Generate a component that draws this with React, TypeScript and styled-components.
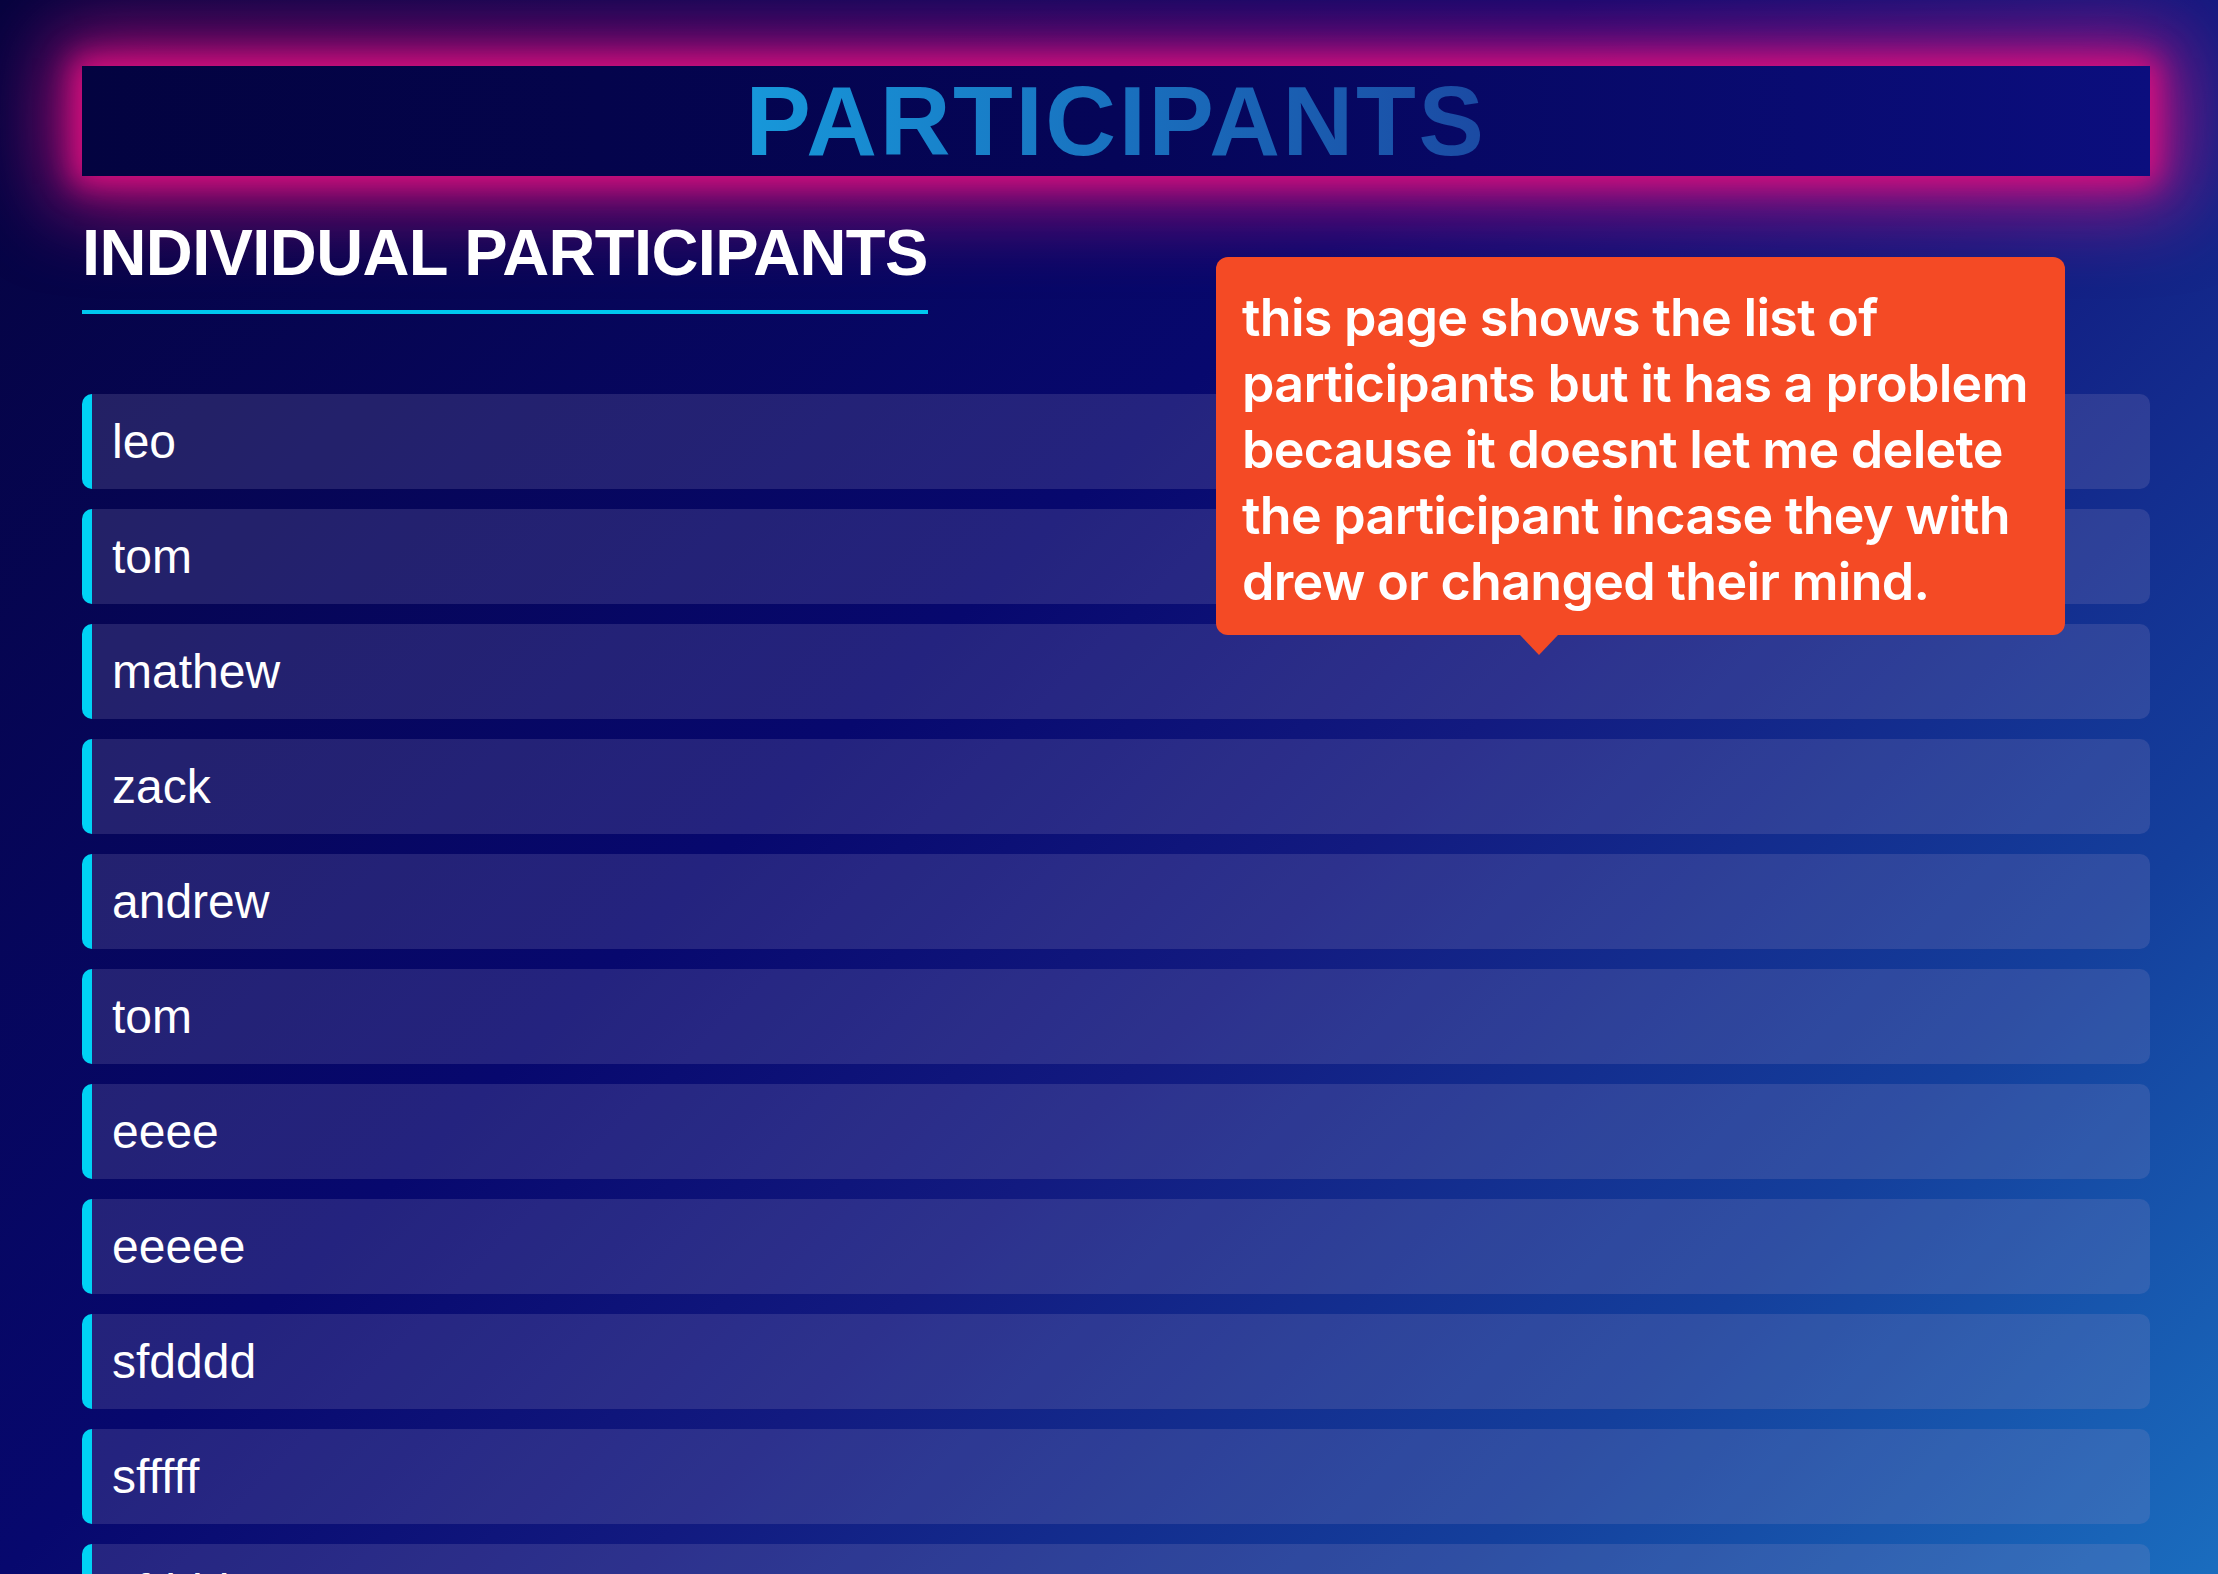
import React from "react";
import styled, { createGlobalStyle } from "styled-components";

const GlobalStyle = createGlobalStyle`
  html, body {
    margin: 0;
    padding: 0;
  }
  body {
    background: #05033e;
    font-family: "Liberation Sans", Arial, sans-serif;
  }
  *, *::before, *::after {
    box-sizing: border-box;
  }
`;

const Page = styled.main`
  position: relative;
  min-height: 100vh;
  padding: 66px 68px 80px 82px;
  background: linear-gradient(
    135deg,
    #05033e 0%,
    #07086e 40%,
    #121a80 56%,
    #143f9c 77%,
    #1a6cbe 96%,
    #1b72c3 100%
  );
`;

const TitleBar = styled.header`
  height: 110px;
  display: flex;
  justify-content: center;
  align-items: center;
  background: linear-gradient(90deg, #030340 0%, #050558 50%, #0b0e7e 100%);
  box-shadow: 0 0 28px 8px #d80f7e, 0 0 80px 28px rgba(222, 16, 128, 0.75);
`;

const Title = styled.h1`
  margin: 0;
  font-size: 98px;
  line-height: 110px;
  font-weight: 700;
  letter-spacing: 2.6px;
  background: linear-gradient(90deg, #1798da 0%, #1b4aa3 100%);
  -webkit-background-clip: text;
  background-clip: text;
  color: transparent;
`;

const Section = styled.section`
  display: flex;
  flex-direction: column;
`;

const SectionTitle = styled.h2`
  align-self: flex-start;
  margin: 39px 0 0;
  padding-bottom: 20px;
  border-bottom: 4px solid #00c8f0;
  color: #ffffff;
  font-size: 65px;
  line-height: 75px;
  font-weight: 700;
  letter-spacing: -0.6px;
`;

const List = styled.ul`
  margin: 80px 0 0;
  padding: 0;
  display: flex;
  flex-direction: column;
  gap: 20px;
`;

const Row = styled.li`
  list-style: none;
  padding: 20px;
  border-left: 10px solid #00d2f5;
  border-radius: 10px;
  background: rgba(155, 145, 195, 0.2);
  color: #ffffff;
  font-size: 48px;
  line-height: 55px;
`;

const Callout = styled.div`
  position: absolute;
  left: 1216px;
  top: 257px;
  width: 849px;
  padding: 28px 26px 20px;
  background: #f44a25;
  border-radius: 12px;
  color: #ffffff;
  font-family: Inter, "Noto Sans", sans-serif;
  font-size: 52px;
  line-height: 66px;
  font-weight: 600;
  letter-spacing: -0.7px;
  white-space: nowrap;

  &::after {
    content: "";
    position: absolute;
    top: 100%;
    left: 304px;
    border-left: 19px solid transparent;
    border-right: 19px solid transparent;
    border-top: 20px solid #f44a25;
  }
`;

const participants = [
  "leo",
  "tom",
  "mathew",
  "zack",
  "andrew",
  "tom",
  "eeee",
  "eeeee",
  "sfdddd",
  "sfffff",
  "sfddd",
];

const calloutLines = [
  "this page shows the list of",
  "participants but it has a problem",
  "because it doesnt let me delete",
  "the participant incase they with",
  "drew or changed their mind.",
];

export default function App() {
  return (
    <>
      <GlobalStyle />
      <Page>
        <TitleBar>
          <Title>PARTICIPANTS</Title>
        </TitleBar>
        <Section>
          <SectionTitle>INDIVIDUAL PARTICIPANTS</SectionTitle>
          <List>
            {participants.map((name, i) => (
              <Row key={i}>{name}</Row>
            ))}
          </List>
        </Section>
        <Callout>
          {calloutLines.map((line, i) => (
            <React.Fragment key={i}>
              {line}
              {i < calloutLines.length - 1 && <br />}
            </React.Fragment>
          ))}
        </Callout>
      </Page>
    </>
  );
}
